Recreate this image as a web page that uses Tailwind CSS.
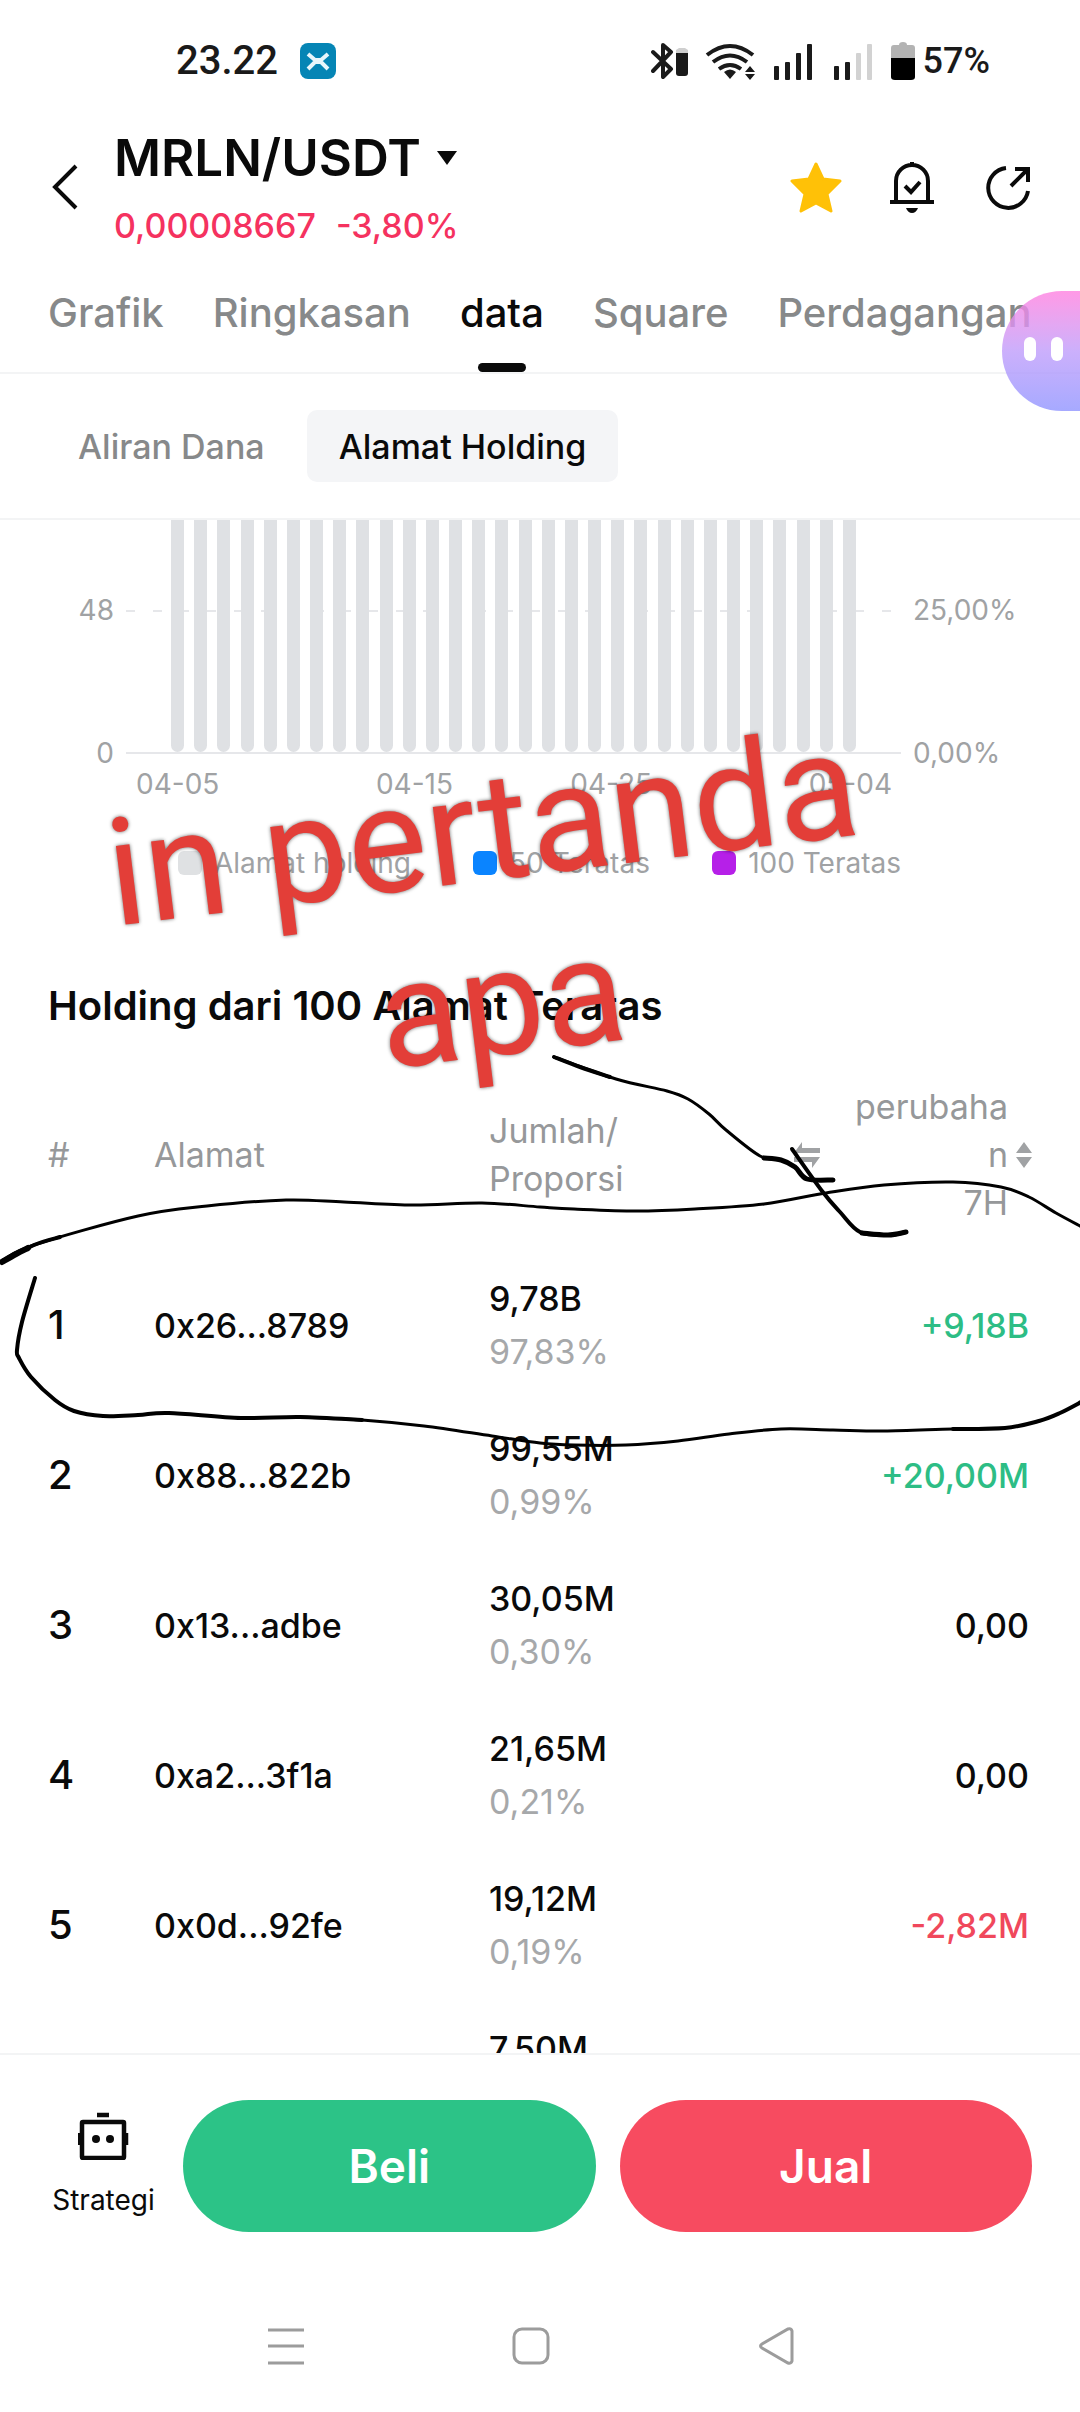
<!DOCTYPE html>
<html lang="id">
<head>
    <meta charset="UTF-8">
    <meta name="viewport" content="width=device-width, initial-scale=1.0">
    <title>MRLN/USDT - Alamat Holding</title>
    <script src="https://cdn.jsdelivr.net/npm/@tailwindcss/browser@4"></script>
</head>
<body class="relative h-screen flex flex-col overflow-hidden bg-white font-['Inter','Liberation_Sans',sans-serif] text-[#0a0a0a]">

    <!-- Status bar -->
    <div class="h-[122px] shrink-0 flex items-center justify-between pl-[176px] pr-[90px] font-['Roboto',sans-serif] font-medium text-[#1a1a1a]">
        <div class="flex items-center gap-[22px]">
            <span class="text-[40px] leading-12">23.22</span>
            <svg class="w-9 h-9" viewBox="0 0 36 36" fill="none">
                <rect width="36" height="36" rx="8" fill="#0585b5"/>
                <path d="M8 11l7 6h6l7-6M8 26l7-7h6l7 7" stroke="#e8f6fb" stroke-width="4"/>
            </svg>
        </div>
        <div class="flex items-center gap-4">
            <svg class="w-[38px] h-10" viewBox="0 0 38 40" fill="none">
                <path d="M2 11l18 17-8 8V4l8 7L2 30" stroke="#1a1a1a" stroke-width="4" stroke-linejoin="round" stroke-linecap="round"/>
                <path d="M25 12v-3l3-2h6l3 2v3z" fill="#cfcfcf"/>
                <path d="M25 12h12v20a3 3 0 0 1-3 3h-6a3 3 0 0 1-3-3z" fill="#1a1a1a"/>
            </svg>
            <svg class="w-[52px] h-10" viewBox="0 0 52 40" fill="none">
                <path d="M2 14q23-18 46 0M8 21q17-13 34 0M14 28q11-8 22 0" stroke="#1a1a1a" stroke-width="4"/>
                <path d="M19 31q6-5 12 0l-6 7z" fill="#1a1a1a"/>
                <path d="M40 31l5-6 5 6zM40 33h10l-5 6z" fill="#1a1a1a"/>
            </svg>
            <svg class="w-10 h-10" viewBox="0 0 40 40" fill="#1a1a1a">
                <rect x="1" y="25" width="5" height="14" rx="1"/><rect x="12" y="21" width="5" height="18" rx="1"/>
                <rect x="23" y="12" width="5" height="27" rx="1"/><rect x="34" y="3" width="5" height="36" rx="1"/>
            </svg>
            <svg class="w-10 h-10 ml-1" viewBox="0 0 40 40" fill="#1a1a1a">
                <rect x="1" y="25" width="5" height="14" rx="1"/><rect x="12" y="21" width="5" height="18" rx="1"/>
                <rect x="23" y="12" width="5" height="27" rx="1" fill="#d2d2d2"/><rect x="34" y="3" width="5" height="36" rx="1" fill="#d2d2d2"/>
            </svg>
            <div class="flex items-center gap-2 ml-[2px]">
                <svg class="w-6 h-10" viewBox="0 0 24 40">
                    <path d="M0 17V7q0-3 3-3h5q0-3 4-3t4 3h5q3 0 3 3v10z" fill="#b3b3b3"/>
                    <path d="M0 17h24v19q0 3-4 3H4q-4 0-4-3z" fill="#000"/>
                </svg>
                <span class="text-[36px] leading-12">57%</span>
            </div>
        </div>
    </div>

    <!-- Pair header -->
    <header class="h-[132px] shrink-0 flex items-center pl-12 pr-12">
        <button aria-label="Kembali" class="w-[66px]">
            <svg class="w-[34px] h-12" viewBox="0 0 34 48" fill="none" stroke="#0a0a0a" stroke-width="4">
                <path d="M28 2L7 23l21 21"/>
            </svg>
        </button>
        <div class="flex-1">
            <button class="flex items-center gap-4 text-[51px] leading-16 font-semibold">
                MRLN/USDT
                <svg class="w-5 h-4" viewBox="0 0 20 16"><path d="M0 1h20L10 15z" fill="#0a0a0a"/></svg>
            </button>
            <p class="mt-3 flex gap-5 text-[34px] leading-12 font-medium text-[#f5325f]">
                <span>0,00008667</span><span>-3,80%</span>
            </p>
        </div>
        <div class="flex items-center gap-[47px]">
            <button aria-label="Favorit">
                <svg class="w-[52px] h-[52px]" viewBox="0 0 52 52" fill="#ffc107" stroke="#ffc107" stroke-width="3" stroke-linejoin="round">
                    <path d="M26 2l7 15 17 2-13 13 4 17-15-8-15 8 4-17L2 19l17-2z"/>
                </svg>
            </button>
            <button aria-label="Notifikasi harga">
                <svg class="w-[48px] h-[52px]" viewBox="0 0 48 52" fill="none" stroke="#0a0a0a" stroke-width="4">
                    <path d="M7 40V19a16 16 0 0 1 32 0v21M1 40h44M23 0v4"/>
                    <path d="M16 24l6 6 9-10"/>
                    <path d="M17 46h12q-2 5-6 5t-6-5z" fill="#0a0a0a" stroke="none"/>
                </svg>
            </button>
            <button aria-label="Bagikan">
                <svg class="w-[48px] h-[48px]" viewBox="0 0 48 48" fill="none" stroke="#0a0a0a" stroke-width="4">
                    <path d="M22 4a20 20 0 1 0 22 23"/>
                    <path d="M27 22L43 6M31 5h13v13"/>
                </svg>
            </button>
        </div>
    </header>

    <!-- Main tabs -->
    <nav class="h-[120px] shrink-0 flex items-stretch gap-[49px] pl-12 border-b-2 border-[#f3f4f5] text-[40px] font-medium text-[#87898a] whitespace-nowrap">
        <a href="#" class="flex items-center">Grafik</a>
        <a href="#" class="flex items-center">Ringkasan</a>
        <a href="#" class="relative flex items-center text-[#0a0a0a]">
            data
            <span class="absolute bottom-0 left-1/2 -translate-x-1/2 w-12 h-[9px] rounded-full bg-[#0a0a0a]"></span>
        </a>
        <a href="#" class="flex items-center">Square</a>
        <a href="#" class="flex items-center">Perdagangan</a>
    </nav>

    <!-- Sub tabs -->
    <div class="h-[146px] shrink-0 flex items-center pl-12 border-b-2 border-[#f3f4f5] text-[34px] font-medium">
        <button class="h-[72px] px-[30px] text-[#87898a]">Aliran Dana</button>
        <button class="h-[72px] px-8 ml-3 rounded-[10px] bg-[#f4f5f7]">Alamat Holding</button>
    </div>

    <main class="flex-1 min-h-0 overflow-hidden">
        <!-- Holding chart -->
        <section class="text-[28px] leading-10 text-[#a0a2a4]">
            <div class="h-[234px] flex">
                <div class="w-[126px] pt-[70px] pr-3 text-right">
                    <p>48</p>
                    <p class="mt-[103px]">0</p>
                </div>
                <div class="relative flex-1 border-b-2 border-[#e6e7ea]">
                    <svg class="absolute top-[90px] left-0 w-full h-[2px]"><line x1="0" y1="1" x2="100%" y2="1" stroke="#e6e7ea" stroke-width="2" stroke-dasharray="9 18"/></svg>
                    <div id="bars" class="relative h-full flex justify-between px-[45px]"></div>
                </div>
                <div class="w-[179px] pt-[70px] pl-3">
                    <p>25,00%</p>
                    <p class="mt-[103px]">0,00%</p>
                </div>
            </div>
            <div class="mt-[10px] flex pl-[136px] pr-[188px]">
                <span>04-05</span><i class="flex-[4]"></i>
                <span>04-15</span><i class="flex-[3]"></i>
                <span>04-25</span><i class="flex-[4]"></i>
                <span>05-04</span>
            </div>
            <div class="mt-[39px] flex justify-between pl-[178px] pr-[179px]">
                <span class="flex items-center gap-3"><i class="w-6 h-6 rounded-md bg-[#dfe1e3]"></i>Alamat holding</span>
                <span class="flex items-center gap-3"><i class="w-6 h-6 rounded-md bg-[#0a84ff]"></i>50 Teratas</span>
                <span class="flex items-center gap-3"><i class="w-6 h-6 rounded-md bg-[#b620e8]"></i>100 Teratas</span>
            </div>
        </section>

        <!-- Top holders -->
        <section class="mt-[99px] px-12">
            <h2 class="text-[40px] leading-12 font-semibold">Holding dari 100 Alamat Teratas</h2>
            <table class="mt-[53px] w-full table-fixed">
                <thead class="text-[34px] leading-12 text-[#96989a]">
                    <tr>
                        <th class="w-[106px] pb-[23px] text-left font-normal">#</th>
                        <th class="w-[335px] pb-[23px] text-left font-normal">Alamat</th>
                        <th class="w-[331px] pb-[23px] text-left font-normal">
                            <button class="w-full flex items-center justify-between text-left">
                                <span>Jumlah/<br>Proporsi</span>
                                <svg class="w-[26px] h-[26px]" viewBox="0 0 26 26" fill="#a0a2a4"><path d="M26 6v5H0L8 0v6zM0 15h26l-8 11v-6H0z"/></svg>
                            </button>
                        </th>
                        <th class="pb-[23px] font-normal">
                            <button class="w-full flex items-center justify-end gap-2 text-right">
                                <span>perubaha<br>n<br>7H</span>
                                <svg class="w-4 h-[28px]" viewBox="0 0 16 28" fill="#a0a2a4"><path d="M0 12L8 1l8 11zM0 16h16L8 27z"/></svg>
                            </button>
                        </th>
                    </tr>
                </thead>
                <tbody id="holders" class="text-[34px] font-medium"></tbody>
            </table>
        </section>
    </main>

    <!-- Trade bar -->
    <div class="shrink-0 flex items-center gap-6 px-12 pt-[45px] pb-12 border-t-2 border-[#f3f4f5] bg-white">
        <button class="w-[111px] flex flex-col items-center gap-5 text-[28px] leading-10">
            <svg class="w-[52px] h-12" viewBox="0 0 52 48" fill="none" stroke="#0a0a0a" stroke-width="4.500">
                <rect x="4" y="10" width="42" height="36" rx="1"/>
                <path d="M19 3h12M2 21v12M48 21v12"/>
                <circle cx="18" cy="27" r="4" fill="#0a0a0a" stroke="none"/><circle cx="32" cy="27" r="4" fill="#0a0a0a" stroke="none"/>
            </svg>
            Strategi
        </button>
        <button class="flex-1 h-[132px] rounded-full bg-[#2cc387] text-white text-[46px] font-semibold">Beli</button>
        <button class="flex-1 h-[132px] rounded-full bg-[#f74b60] text-white text-[46px] font-semibold">Jual</button>
    </div>

    <!-- Android navigation -->
    <div class="h-[132px] shrink-0 flex items-center justify-between pl-[266px] pr-[284px]">
        <button aria-label="Aplikasi terbaru"><svg class="w-10 h-10" viewBox="0 0 40 40" fill="none" stroke="#9c9c9c" stroke-width="3"><path d="M2 4h36M2 20h36M2 37h36"/></svg></button>
        <button aria-label="Beranda"><svg class="w-10 h-10" viewBox="0 0 40 40" fill="none" stroke="#9c9c9c" stroke-width="3"><rect x="3" y="3" width="34" height="34" rx="8"/></svg></button>
        <button aria-label="Kembali"><svg class="w-10 h-10" viewBox="0 0 40 40" fill="none" stroke="#9c9c9c" stroke-width="3"><path d="M32 3q3-1 4 2v30q-1 3-4 2L6 22q-3-2 0-4z"/></svg></button>
    </div>

    <!-- Floating assistant -->
    <button aria-label="Asisten" class="absolute top-[291px] right-0 w-[78px] h-[120px] rounded-l-full bg-linear-to-b from-[#ff80e0]/80 via-[#bf9cfb]/80 to-[#9094ff]/80 flex items-center gap-[15px] pl-[22px] pb-[4px]">
        <i class="w-3 h-6 rounded-full bg-white"></i>
        <i class="w-3 h-6 rounded-full bg-white"></i>
    </button>

    <!-- Handwritten notes -->
    <svg id="ink" class="absolute inset-0 w-full h-full pointer-events-none" viewBox="0 0 1080 2412" fill="none" stroke="#000" stroke-linecap="round" stroke-linejoin="round"></svg>
    <p class="absolute top-[742px] left-[116px] w-[750px] -rotate-7 text-center whitespace-nowrap font-['Roboto',sans-serif] text-[150px] leading-[175px] text-[#e33e38] text-shadow-[0_0_4px_rgb(0_0_0_/_0.6)] pointer-events-none">in pertanda<br>apa</p>

    <script>
        document.getElementById('bars').innerHTML =
            '<i class="w-[13px] h-full rounded-b-full bg-[#dfe1e4]"></i>'.repeat(30);

        const holders = [
            ['0x26...8789', '9,78B', '97,83%', '+9,18B', 'text-[#2dbd85]'],
            ['0x88...822b', '99,55M', '0,99%', '+20,00M', 'text-[#2dbd85]'],
            ['0x13...adbe', '30,05M', '0,30%', '0,00', ''],
            ['0xa2...3f1a', '21,65M', '0,21%', '0,00', ''],
            ['0x0d...92fe', '19,12M', '0,19%', '-2,82M', 'text-[#f0485c]'],
            ['', '7,50M', '', '', '']
        ];
        document.getElementById('holders').innerHTML = holders.map(([address, amount, share, change, color], i) => `
            <tr class="h-[150px]">
                <td class="text-[40px]">${address ? i + 1 : ''}</td>
                <td>${address}</td>
                <td class="leading-[53px]">${amount}<br><span class="font-normal text-[#a6a8aa]">${share || '&nbsp;'}</span></td>
                <td class="text-right pr-[3px] ${color}">${change}</td>
            </tr>`).join('');

        // pen strokes: [width, x, y, x, y, ...]
        const strokes = [
            [6, 2,1262, 16,1254, 28,1248],
            [4, 2,1261, 34,1245, 60,1237],
            [3, 2,1261, 34,1245, 138,1216, 207,1206, 286,1200, 344,1202, 413,1205, 482,1203, 540,1207, 574,1209, 636,1211, 695,1209, 764,1204, 826,1193, 884,1185, 953,1182, 1001,1187, 1029,1197, 1056,1213, 1082,1227],
            [4, 35,1278, 22,1322, 17,1350, 19,1358, 31,1377, 55,1400, 74,1411, 103,1416, 138,1415, 169,1413, 241,1418, 300,1417, 362,1420],
            [3, 300,1417, 362,1420, 424,1426, 492,1436, 540,1443, 574,1445, 626,1445, 678,1441, 729,1434, 781,1429, 833,1430, 884,1431, 953,1429, 1005,1428],
            [4, 953,1429, 1005,1428, 1039,1421, 1060,1413, 1083,1401],
            [3, 554,1057, 616,1079, 667,1091, 688,1099, 709,1114, 726,1130, 760,1156, 781,1160, 795,1167, 807,1179, 833,1180],
            [4, 554,1057, 580,1067, 610,1077],
            [5, 764,1158, 781,1160, 795,1167, 807,1179, 833,1180],
            [4, 792,1149, 822,1191, 840,1212, 860,1232, 888,1235, 906,1232],
            [5, 862,1233, 888,1235, 906,1232]
        ];
        document.getElementById('ink').innerHTML = strokes.map(([width, ...p]) => {
            const n = p.length / 2;
            const at = i => { i = Math.max(0, Math.min(n - 1, i)); return [p[2 * i], p[2 * i + 1]]; };
            let d = `M${at(0)}`;
            for (let i = 0; i < n - 1; i++) {
                const [a, b, c, e] = [at(i - 1), at(i), at(i + 1), at(i + 2)];
                d += `C${b[0] + (c[0] - a[0]) / 6} ${b[1] + (c[1] - a[1]) / 6} ${c[0] - (e[0] - b[0]) / 6} ${c[1] - (e[1] - b[1]) / 6} ${c}`;
            }
            return `<path d="${d}" stroke-width="${width}"/>`;
        }).join('');
    </script>
</body>
</html>
